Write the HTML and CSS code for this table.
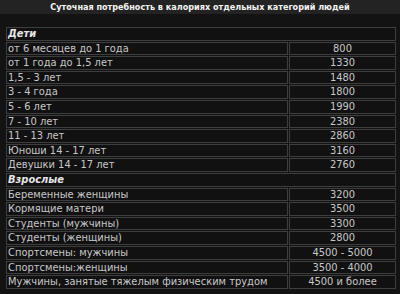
FILE: index.html
```html
<!DOCTYPE html>
<html lang="ru">
<head>
<meta charset="utf-8">
<title>Суточная потребность в калориях</title>
<link rel="stylesheet" href="styles.css">
</head>
<body>
<div class="title">Суточная потребность в калориях отдельных категорий людей</div>
<table class="cal">
<colgroup><col class="c1"><col class="c2"></colgroup>
<tr><td colspan="2" class="cat">Дети</td></tr>
<tr><td>от 6 месяцев до 1 года</td><td class="num">800</td></tr>
<tr><td>от 1 года до 1,5 лет</td><td class="num">1330</td></tr>
<tr><td>1,5 - 3 лет</td><td class="num">1480</td></tr>
<tr><td>3 - 4 года</td><td class="num">1800</td></tr>
<tr><td>5 - 6 лет</td><td class="num">1990</td></tr>
<tr><td>7 - 10 лет</td><td class="num">2380</td></tr>
<tr><td>11 - 13 лет</td><td class="num">2860</td></tr>
<tr><td>Юноши 14 - 17 лет</td><td class="num">3160</td></tr>
<tr><td>Девушки 14 - 17 лет</td><td class="num">2760</td></tr>
<tr><td colspan="2" class="cat">Взрослые</td></tr>
<tr><td>Беременные женщины</td><td class="num">3200</td></tr>
<tr><td>Кормящие матери</td><td class="num">3500</td></tr>
<tr><td>Студенты (мужчины)</td><td class="num">3300</td></tr>
<tr><td>Студенты (женщины)</td><td class="num">2800</td></tr>
<tr><td>Спортсмены: мужчины</td><td class="num">4500 - 5000</td></tr>
<tr><td>Спортсмены:женщины</td><td class="num">3500 - 4000</td></tr>
<tr><td>Мужчины, занятые тяжелым физическим трудом</td><td class="num">4500 и более</td></tr>
</table>
</body>
</html>
```
FILE: styles.css
```css
html, body {
  margin: 0;
  padding: 0;
  background: #131313;
}
body {
  font-family: "DejaVu Sans Condensed", "DejaVu Sans", sans-serif;
  font-size: 11px;
  color: #c8c8c8;
}
.title {
  height: 14px;
  line-height: 14px;
  background: #232323;
  color: #f4f4f4;
  font-weight: bold;
  font-size: 9px;
  text-align: center;
  margin-bottom: 13px;
}
.cal {
  margin-left: 5px;
  width: 389px;
  border-collapse: separate;
  border-spacing: 1px;
  margin-top: -1px;
  table-layout: fixed;
}
.c1 { width: 282px; }
.c2 { width: 107px; }
.cal td {
  border: 1px solid #3e3e3e;
  background: #111111;
  height: 11.6px;
  line-height: 11.6px;
  padding: 0 0 0 1px;
  white-space: nowrap;
  overflow: hidden;
}
.cal td.num {
  text-align: center;
  padding: 0;
}
.cal td.cat {
  font-weight: bold;
  font-style: italic;
  color: #e6e6e6;
}
```
